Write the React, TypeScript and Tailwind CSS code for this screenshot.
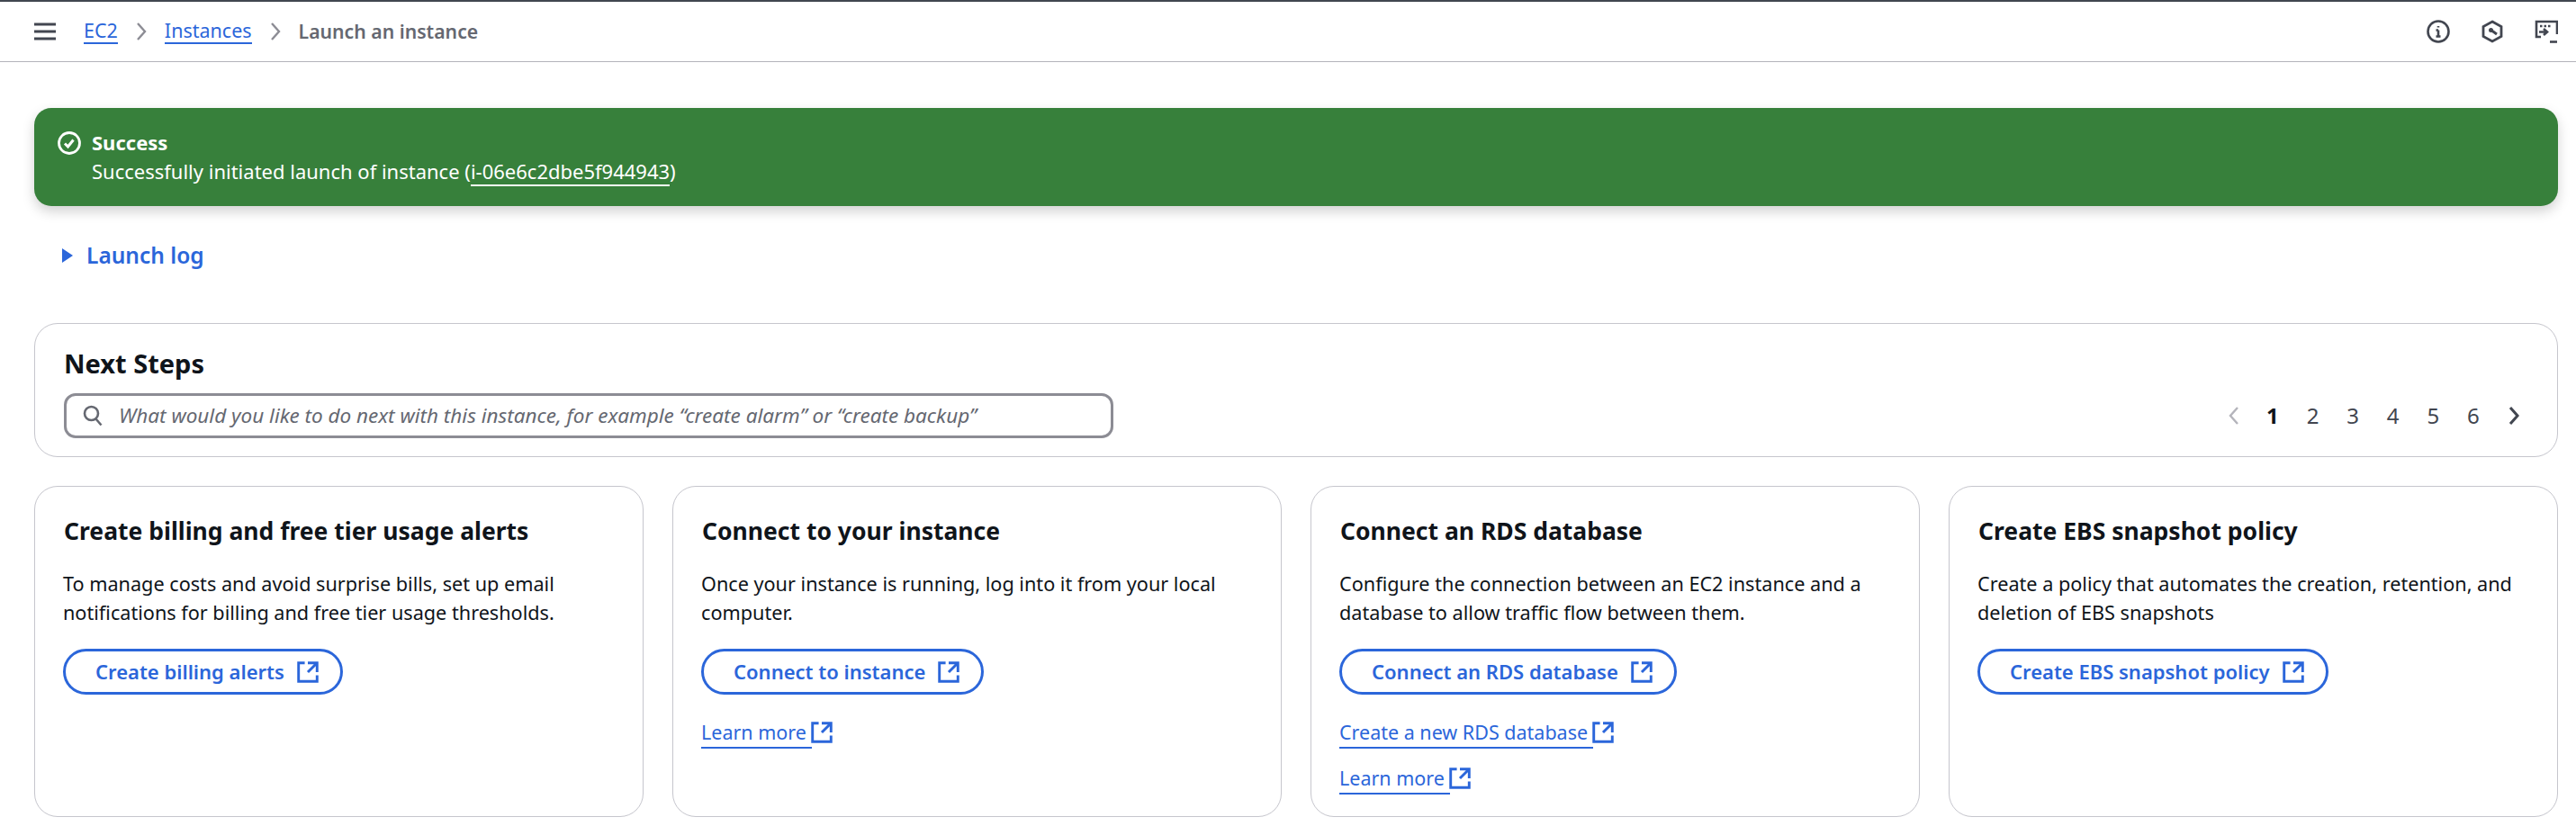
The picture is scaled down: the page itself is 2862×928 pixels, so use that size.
import React from "react";

const F = "font-['Noto_Sans','Liberation_Sans',sans-serif]";

function Ext({ className = "" }: { className?: string }) {
  return (
    <svg viewBox="1 1 14 14" fill="none" stroke="currentColor" strokeWidth="1.7" className={className}>
      <path d="M14 8V2H8M14 2 8 8M6 2H2v12h12v-4" />
    </svg>
  );
}

function Chevron({ className = "", sw = 2 }: { className?: string; sw?: number }) {
  return (
    <svg viewBox="0 0 12 22" fill="none" stroke="currentColor" strokeWidth={sw} className={className}>
      <path d="M2 2l8 9-8 9" />
    </svg>
  );
}

function TopIcons() {
  return (
    <div className="flex items-center gap-[34px] text-[#424650]">
      <svg viewBox="0 0 26 26" fill="none" stroke="currentColor" strokeWidth="2.6" className="w-[26px] h-[26px]">
        <circle cx="13" cy="13" r="11.5" />
        <path d="M13 11.5v7M10.5 18.5h5M10.5 11.5H13M13 7v1.6" />
      </svg>
      <svg viewBox="0 0 26 26" fill="none" stroke="currentColor" strokeWidth="2.8" className="w-[26px] h-[26px]">
        <path d="M13 2l10 5.6v10.8L13 24 3 18.4V7.6z" />
        <path d="M11 11l7 5" />
        <circle cx="11.5" cy="11.5" r="2.5" fill="currentColor" stroke="none" />
      </svg>
      <svg viewBox="0 0 26 26" fill="none" stroke="currentColor" strokeWidth="2.6" className="w-[26px] h-[26px]">
        <path d="M7 19H2V2h23v14" />
        <path d="M6 7h2.500M10.500 7H13M15 7h2.500" />
        <path d="M5 13.500h9M10 10l4 3.500-4 3.500" />
        <path d="M17 24.500h8" />
      </svg>
    </div>
  );
}

function Button({ label }: { label: string }) {
  return (
    <button className="h-[51px] self-start flex items-center gap-[14px] pl-[33px] pr-[24px] rounded-full border-[3px] border-[#2b66da] text-[#2b66da] font-semibold text-[22px]">
      {label}
      <Ext className="w-[24px] h-[24px]" />
    </button>
  );
}

function LinkRow({ label }: { label: string }) {
  return (
    <div className="h-[28px] flex items-center text-[#2b66da] text-[21.500px]">
      <span className="border-b-[2px] border-[#2b66da] pr-[6px] leading-[28px] h-[32px] mt-[3px]">{label}</span>
      <Ext className="w-[24px] h-[24px] -ml-[1px]" />
    </div>
  );
}

function Card({ title, lines, button, links = [] }: { title: string; lines: string[]; button: string; links?: string[] }) {
  return (
    <div className="h-[368px] rounded-[26px] border border-[#c6c6cd] bg-white pl-[32px] pr-[20px] pt-[31px] flex flex-col">
      <h3 className="text-[26.500px] leading-[36px] font-bold text-[#0f141a]">{title}</h3>
      <div className="mt-[25px] -ml-[1px] text-[21.650px] leading-[32px] text-[#0f141a]">
        {lines.map((l) => (
          <div key={l}>{l}</div>
        ))}
      </div>
      <div className="mt-[24px]" />
      <div className="-ml-[1px] flex flex-col">
        <Button label={button} />
        <div className="flex flex-col gap-[23px] mt-[28px]">
          {links.map((l) => (
            <LinkRow key={l} label={l} />
          ))}
        </div>
      </div>
    </div>
  );
}

export default function App() {
  return (
    <div className={`${F} w-[2862px] h-[928px] bg-white overflow-hidden`}>
      <header className="h-[69px] border-t-2 border-t-[#414750] border-b border-b-[#b4b4bb] flex items-center pl-[38px] pr-[20px]">
        <svg viewBox="0 0 24 20" className="w-[24px] h-[20px] text-[#424650]" fill="none" stroke="currentColor" strokeWidth="3">
          <path d="M0 2h24M0 10h24M0 18h24" />
        </svg>
        <nav className="flex items-center text-[21.500px] ml-[31px]">
          <a className="text-[#2b66da] border-b-2 border-[#2b66da] leading-[27px]">EC2</a>
          <Chevron sw={2.4} className="w-[12px] h-[22px] mx-[20px] text-[#8c8c94]" />
          <a className="text-[#2b66da] border-b-2 border-[#2b66da] leading-[27px]">Instances</a>
          <Chevron sw={2.4} className="w-[12px] h-[22px] mx-[20px] text-[#8c8c94]" />
          <span className="font-semibold text-[#656871] text-[21.200px]">Launch an instance</span>
        </nav>
        <div className="ml-auto">
          <TopIcons />
        </div>
      </header>

      <main className="pl-[38px] pr-[20px] pt-[51px]">
        <div className="h-[109px] rounded-[19px] bg-[#37803b] text-white shadow-[0_6px_14px_rgba(0,0,0,0.18)] flex pl-[26px] pt-[22px] text-[22px]">
          <svg viewBox="0 0 26 26" fill="none" stroke="currentColor" strokeWidth="2.8" className="w-[26px] h-[26px] mr-[12px] mt-[4px]">
            <circle cx="13" cy="13" r="11.500" />
            <path d="M8 13.500l3.500 3.500 6-7.500" strokeWidth="3" />
          </svg>
          <div className="leading-[32px]">
            <div className="font-bold">Success</div>
            <div>
              Successfully initiated launch of instance (<span className="border-b-2 border-white">i-06e6c2dbe5f944943</span>)
            </div>
          </div>
        </div>

        <div className="h-[130px] flex items-center pl-[30px] pb-[20px] text-[#2b66da]">
          <svg viewBox="0 0 14 18" className="w-[14px] h-[18px] mr-[14px]" fill="currentColor">
            <path d="M1 1l12 8-12 8z" />
          </svg>
          <span className="font-semibold text-[24.500px]">Launch log</span>
        </div>

        <section className="h-[149px] rounded-[26px] border border-[#c6c6cd] pl-[32px] pr-[42px] pt-[25px]">
          <h2 className="text-[29px] leading-[38px] font-bold text-[#0f141a]">Next Steps</h2>
          <div className="flex items-center justify-between mt-[14px]">
            <div className="w-[1166px] h-[50px] rounded-[13px] border-[3px] border-[#8c8c94] flex items-center pl-[18px]">
              <svg viewBox="0 0 22 24" fill="none" stroke="currentColor" strokeWidth="2.6" className="w-[22px] h-[24px] text-[#656871] mr-[18px]">
                <circle cx="9.500" cy="9.500" r="7.500" />
                <path d="M14.500 15.500l6 7" />
              </svg>
              <span className="italic text-[22.500px] text-[#656871]">
                What would you like to do next with this instance, for example “create alarm” or “create backup”
              </span>
            </div>
            <div className="flex items-center text-[24px] text-[#424650]">
              <Chevron sw={2.4} className="w-[12px] h-[22px] mr-[30px] rotate-180 text-[#b4b4bb]" />
              <span className="w-[44.600px] font-bold text-[#0f141a]">1</span>
              <span className="w-[44.600px]">2</span>
              <span className="w-[44.600px]">3</span>
              <span className="w-[44.600px]">4</span>
              <span className="w-[44.600px]">5</span>
              <span className="w-[46px]">6</span>
              <Chevron sw={3} className="w-[12px] h-[22px] text-[#424650]" />
            </div>
          </div>
        </section>

        <div className="grid grid-cols-4 gap-[32px] mt-[32px]">
          <Card
            title="Create billing and free tier usage alerts"
            lines={["To manage costs and avoid surprise bills, set up email", "notifications for billing and free tier usage thresholds."]}
            button="Create billing alerts"
          />
          <Card
            title="Connect to your instance"
            lines={["Once your instance is running, log into it from your local", "computer."]}
            button="Connect to instance"
            links={["Learn more"]}
          />
          <Card
            title="Connect an RDS database"
            lines={["Configure the connection between an EC2 instance and a", "database to allow traffic flow between them."]}
            button="Connect an RDS database"
            links={["Create a new RDS database", "Learn more"]}
          />
          <Card
            title="Create EBS snapshot policy"
            lines={["Create a policy that automates the creation, retention, and", "deletion of EBS snapshots"]}
            button="Create EBS snapshot policy"
          />
        </div>
      </main>
    </div>
  );
}
